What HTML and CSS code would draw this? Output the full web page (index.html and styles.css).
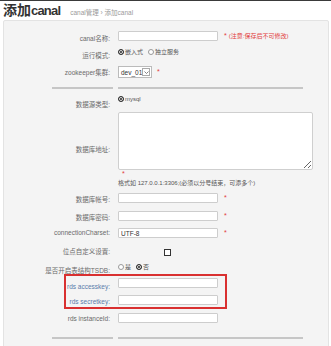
FILE: index.html
```html
<!DOCTYPE html>
<html>
<head>
<meta charset="utf-8">
<link rel="stylesheet" href="styles.css">
</head>
<body>
<header class="head">
  <h1 class="title">添加<span class="lat">canal</span></h1>
  <span class="crumb">canal管理 › 添加canal</span>
</header>
<div class="panel">
  <div class="row row-name">
    <label class="lbl p6">canal名称:</label>
    <input class="txt" type="text">
    <span class="req">*</span><span class="note">(注意:保存后不可修改)</span>
  </div>
  <div class="row row-mode">
    <label class="lbl p7">运行模式:</label>
    <span class="opt"><span class="radio on"></span>嵌入式</span>
    <span class="opt"><span class="radio"></span>独立服务</span>
  </div>
  <div class="row row-zk">
    <label class="lbl p1">zookeeper集群:</label>
    <span class="sel">dev_01<span class="arrow"><svg width="5" height="3" viewBox="0 0 5 3"><path d="M0.5 0.5 L2.5 2.5 L4.5 0.5" fill="none" stroke="#666" stroke-width="0.8"/></svg></span></span>
    <span class="req req-sel">*</span>
  </div>
  <div class="sep"><span class="seg-a"></span><span class="seg-b"></span></div>
  <div class="row row-src">
    <label class="lbl p10">数据源类型:</label>
    <span class="opt opt-top"><span class="radio on"></span>mysql</span>
  </div>
  <div class="row row-addr">
    <label class="lbl">数据库地址:</label>
    <div class="areawrap">
      <textarea class="area"></textarea>
      <span class="star-line">*</span>
      <span class="hint">格式如 127.0.0.1:3306;(必须以分号结束，可添多个)</span>
    </div>
  </div>
  <div class="row row-user">
    <label class="lbl p3">数据库帐号:</label>
    <input class="txt" type="text">
    <span class="req">*</span>
  </div>
  <div class="row row-pass">
    <label class="lbl p3">数据库密码:</label>
    <input class="txt" type="password">
    <span class="req">*</span>
  </div>
  <div class="row row-charset">
    <label class="lbl">connectionCharset:</label>
    <input class="txt" type="text" value="UTF-8">
    <span class="req">*</span>
  </div>
  <div class="row row-pos">
    <label class="lbl">位点自定义设置:</label>
    <span class="chk"></span>
  </div>
  <div class="row row-tsdb">
    <label class="lbl p7">是否开启表结构TSDB:</label>
    <span class="opt"><span class="radio"></span>是</span>
    <span class="opt"><span class="radio on"></span>否</span>
  </div>
  <div class="row row-ak">
    <label class="lbl lbl-blue p7">rds accesskey:</label>
    <input class="txt" type="text">
  </div>
  <div class="row row-sk">
    <label class="lbl lbl-blue p4">rds secretkey:</label>
    <input class="txt" type="text">
  </div>
  <div class="row row-inst">
    <label class="lbl p1">rds instanceId:</label>
    <input class="txt" type="text">
  </div>
  <div class="sep sep-bottom"><span class="seg-a"></span><span class="seg-b"></span></div>
  <div class="mark"></div>
</div>
</body>
</html>
```
FILE: styles.css
```css
* { box-sizing: border-box; }

body {
  margin: 0;
  border-top: 1px solid #3a3a3a;
  background: #fff;
  font-family: "Liberation Sans", "Noto Sans CJK SC", sans-serif;
  color: #555;
  overflow: hidden;
}

.head {
  display: flex;
  align-items: center;
  height: 19px;
  padding-left: 3px;
  gap: 10px;
}

.title {
  margin: 0;
  font-size: 14px;
  font-weight: bold;
  color: #333;
  line-height: 19px;
  white-space: nowrap;
}

.title .lat {
  font-size: 13px;
  letter-spacing: -0.8px;
}

.crumb {
  font-size: 6.5px;
  color: #9a9a9a;
  padding-top: 3px;
}

.panel {
  position: relative;
  margin-left: 3px;
  width: 326px;
  height: 340px;
  background: #f4f4f4;
  border: 1px solid #e3e3e3;
  border-radius: 2px 2px 0 0;
  padding-top: 8px;
}

.row {
  display: flex;
  align-items: center;
}

.row-name { height: 14px; }
.row-mode { height: 18px; }
.row-zk { height: 22px; }
.row-src { height: 22px; }
.row-addr { height: 76px; margin-top: 1px; }
.row-user { height: 20px; }
.row-pass { height: 16px; }
.row-charset { height: 18px; }
.row-pos { height: 20px; }
.row-tsdb { height: 10px; }
.row-ak { height: 22px; }
.row-sk { height: 12px; }
.row-inst { height: 24px; }

.lbl {
  flex: none;
  width: 106px;
  margin-right: 8px;
  text-align: right;
  font-size: 6.5px;
  line-height: 8px;
  color: #6a6a6a;
  white-space: nowrap;
}

.lbl-blue { color: #5a7cab; }

.p1 { padding-top: 1px; }
.p3 { padding-top: 3px; }
.p4 { padding-top: 4px; }
.p6 { padding-top: 6px; }
.p7 { padding-top: 7px; }
.p10 { padding-top: 10px; }

.txt {
  flex: none;
  width: 100px;
  height: 10px;
  margin: 0;
  padding: 0 2px;
  border: 1px solid #cdcdcd;
  border-radius: 1px;
  background: #fff;
  font-family: "Liberation Sans", sans-serif;
  font-size: 6.5px;
  color: #333;
  outline: none;
}

.req {
  margin-left: 6px;
  font-size: 7px;
  line-height: 8px;
  color: #e23b3b;
}

.req-sel { margin-left: 5px; }

.note {
  margin-left: 2px;
  font-size: 6px;
  line-height: 8px;
  color: #e23b3b;
}

.opt {
  display: flex;
  align-items: center;
  margin-right: 5px;
  font-size: 6px;
  line-height: 8px;
  color: #555;
}

.radio {
  flex: none;
  width: 6px;
  height: 6px;
  margin-right: 1px;
  border: 1px solid #999;
  border-radius: 50%;
  background: #fff;
}

.radio.on {
  border-color: #333;
  background: #222;
  box-shadow: inset 0 0 0 1px #fff;
}

.opt-top { margin-top: -2px; }

.sel {
  flex: none;
  display: flex;
  align-items: center;
  width: 34px;
  height: 12px;
  padding-left: 2px;
  border: 1px solid #bbb;
  background: #fff;
  font-size: 6.5px;
  color: #333;
}

.sel .arrow {
  display: flex;
  align-items: center;
  justify-content: center;
  width: 8px;
  height: 8px;
  margin-left: auto;
  margin-right: 1px;
  border: 1px solid #aaa;
}

.sep {
  display: flex;
  height: 2px;
  margin-top: 4px;
}

.sep-bottom { margin-top: 7px; }

.seg-a {
  width: 61px;
  margin-left: 48px;
  background: #c6c6c6;
}

.seg-b {
  width: 185px;
  margin-left: 5px;
  background: #c6c6c6;
}

.areawrap {
  display: flex;
  flex-direction: column;
}

.area {
  display: block;
  width: 195px;
  height: 58px;
  margin: 0;
  padding: 0;
  border: 1px solid #cfcfcf;
  border-radius: 2px;
  background: #fff;
  resize: both;
  outline: none;
}

.star-line {
  height: 8px;
  padding-left: 4px;
  font-size: 7px;
  line-height: 8px;
  color: #e23b3b;
}

.hint {
  height: 10px;
  font-size: 6px;
  line-height: 10px;
  color: #555;
  white-space: nowrap;
}

.chk {
  flex: none;
  width: 7px;
  height: 7px;
  margin-left: 46px;
  border: 1px solid #333;
  background: #fff;
}

.mark {
  position: absolute;
  left: 60px;
  top: 253px;
  width: 163px;
  height: 35px;
  border: 2px solid #d93030;
}
```
